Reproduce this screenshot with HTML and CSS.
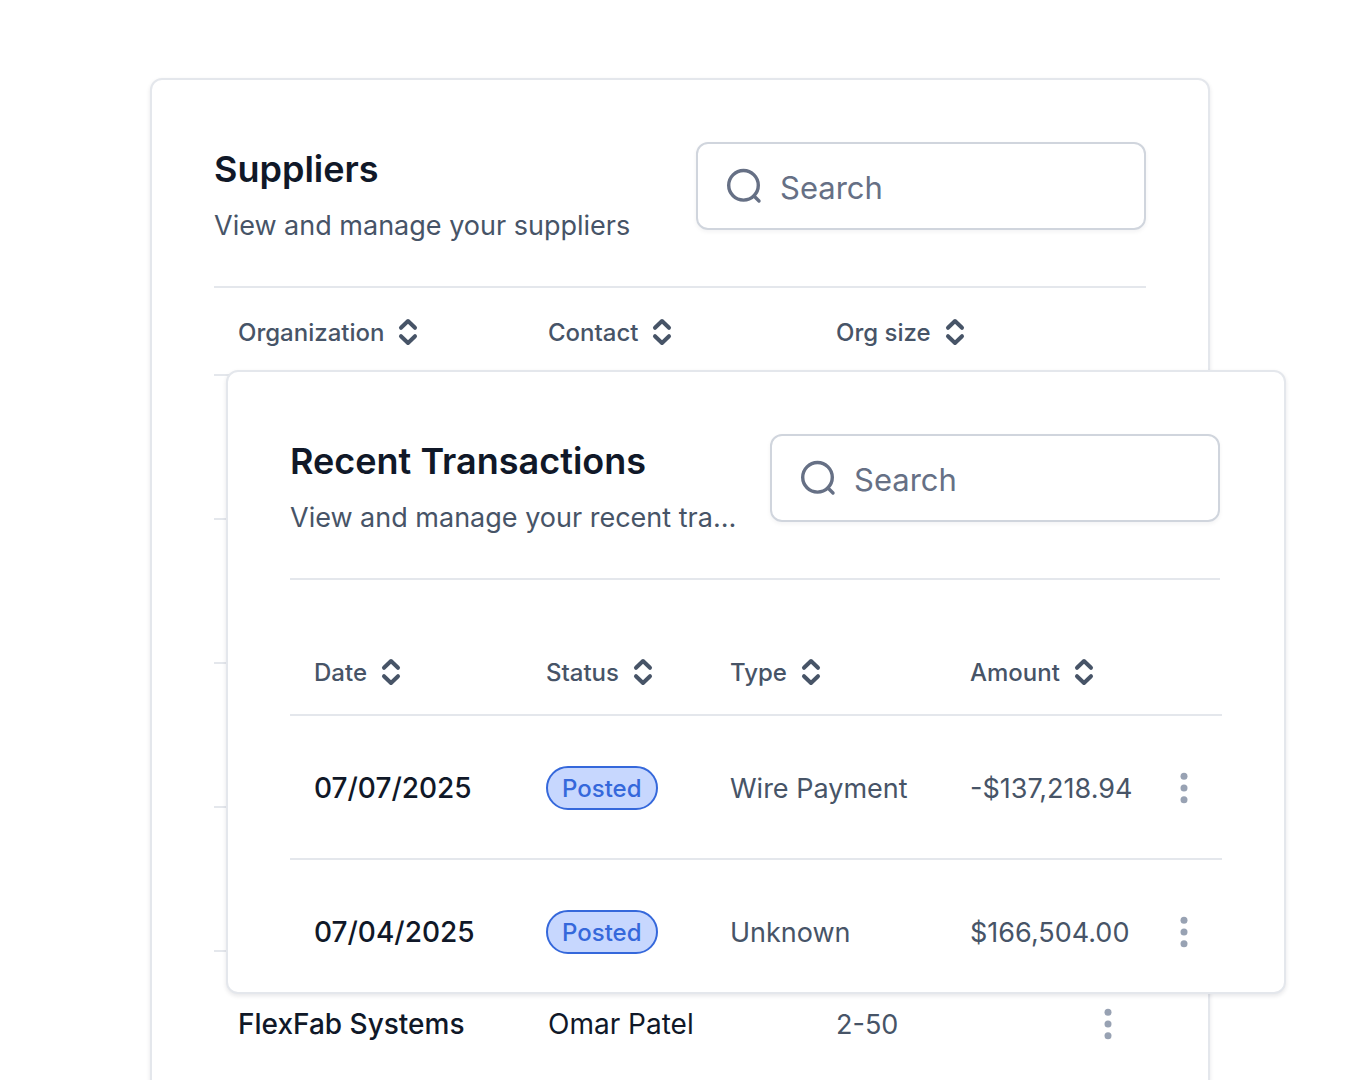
FILE: index.html
```html
<!DOCTYPE html>
<html lang="en">
<head>
    <meta charset="UTF-8">
    <meta name="viewport" content="width=device-width, initial-scale=1.0">
    <link rel="stylesheet" href="styles.css">
    <title>Suppliers</title>
</head>
<body>
    <!-- shared icons -->
    <svg class="sprite" aria-hidden="true">
        <symbol id="icon-search" viewBox="0 0 36 36">
            <circle cx="17.5" cy="17.3" r="14.8"/>
            <path d="M28 28l5 5"/>
        </symbol>
        <symbol id="icon-sort" viewBox="0 0 20 28">
            <path d="M3 9.8L10 3l7 6.8M3 18.2l7 6.8 7-6.8"/>
        </symbol>
        <symbol id="icon-dots" viewBox="0 0 28 40">
            <circle cx="14" cy="8.3" r="3.5"/>
            <circle cx="14" cy="20" r="3.5"/>
            <circle cx="14" cy="31.7" r="3.5"/>
        </symbol>
    </svg>

    <main class="stage">
        <section class="card">
            <header class="card-header">
                <div class="heading">
                    <h2>Suppliers</h2>
                    <p>View and manage your suppliers</p>
                </div>
                <label class="search">
                    <svg class="search-icon" aria-hidden="true"><use href="#icon-search"/></svg>
                    <input type="text" placeholder="Search" aria-label="Search suppliers">
                </label>
            </header>
            <table class="suppliers">
                <thead>
                    <tr>
                        <th class="col-org"><button type="button" class="sort">Organization <svg><use href="#icon-sort"/></svg></button></th>
                        <th class="col-contact"><button type="button" class="sort">Contact <svg><use href="#icon-sort"/></svg></button></th>
                        <th class="col-size"><button type="button" class="sort">Org size <svg><use href="#icon-sort"/></svg></button></th>
                        <th></th>
                    </tr>
                </thead>
                <tbody>
                    <tr><td></td><td></td><td></td><td></td></tr>
                    <tr><td></td><td></td><td></td><td></td></tr>
                    <tr><td></td><td></td><td></td><td></td></tr>
                    <tr><td></td><td></td><td></td><td></td></tr>
                    <tr>
                        <td class="strong">FlexFab Systems</td>
                        <td class="dark">Omar Patel</td>
                        <td>2-50</td>
                        <td class="actions"><button type="button" class="more" aria-label="More"><svg><use href="#icon-dots"/></svg></button></td>
                    </tr>
                </tbody>
            </table>
        </section>

        <section class="card card-front">
            <header class="card-header">
                <div class="heading">
                    <h2>Recent Transactions</h2>
                    <p>View and manage your recent transactions</p>
                </div>
                <label class="search">
                    <svg class="search-icon" aria-hidden="true"><use href="#icon-search"/></svg>
                    <input type="text" placeholder="Search" aria-label="Search transactions">
                </label>
            </header>
            <table class="transactions">
                <thead>
                    <tr>
                        <th class="col-date"><button type="button" class="sort">Date <svg><use href="#icon-sort"/></svg></button></th>
                        <th class="col-status"><button type="button" class="sort">Status <svg><use href="#icon-sort"/></svg></button></th>
                        <th class="col-type"><button type="button" class="sort">Type <svg><use href="#icon-sort"/></svg></button></th>
                        <th class="col-amount"><button type="button" class="sort">Amount <svg><use href="#icon-sort"/></svg></button></th>
                        <th></th>
                    </tr>
                </thead>
                <tbody>
                    <tr>
                        <td class="strong">07/07/2025</td>
                        <td><span class="badge">Posted</span></td>
                        <td>Wire Payment</td>
                        <td>-$137,218.94</td>
                        <td class="actions"><button type="button" class="more" aria-label="More"><svg><use href="#icon-dots"/></svg></button></td>
                    </tr>
                    <tr>
                        <td class="strong">07/04/2025</td>
                        <td><span class="badge">Posted</span></td>
                        <td>Unknown</td>
                        <td>$166,504.00</td>
                        <td class="actions"><button type="button" class="more" aria-label="More"><svg><use href="#icon-dots"/></svg></button></td>
                    </tr>
                </tbody>
            </table>
        </section>
    </main>
</body>
</html>
```
FILE: styles.css
```css
* {
    box-sizing: border-box;
}

body {
    margin: 0;
    font-family: Inter, "Liberation Sans", sans-serif;
    font-size: 27px;
    color: #475467;
    background-color: #fff;
}

button, input {
    font-family: inherit;
    color: inherit;
}

.sprite {
    display: none;
}

.stage {
    position: relative;
    height: 100vh;
    padding: 78px 150px 0;
    overflow: hidden;
}

.card {
    padding: 62px;
    border: 2px solid #e4e7ec;
    border-radius: 12px;
    background-color: #fff;
    box-shadow: 0 2px 4px rgba(16, 24, 40, 0.1);
}

/* sits on top of the suppliers card */
.card-front {
    position: absolute;
    top: 370px;
    right: 74px;
    bottom: 86px;
    left: 226px;
    overflow: hidden;
}

.card-header {
    display: flex;
    align-items: flex-start;
    justify-content: space-between;
    gap: 32px;
    padding-bottom: 30px;
    border-bottom: 2px solid #e4e7ec;
}

.card-front .card-header {
    margin-right: 2px;
}

.heading {
    flex: 1;
    min-width: 0;
}

.heading h2 {
    margin: 0;
    font-size: 36px;
    font-weight: 600;
    line-height: 54px;
    color: #101828;
}

.heading p {
    margin: 0;
    line-height: 60px;
    white-space: nowrap;
    overflow: hidden;
    text-overflow: ellipsis;
}

.search {
    display: flex;
    align-items: center;
    gap: 18px;
    width: 450px;
    height: 88px;
    padding: 0 28px;
    border: 2px solid #d0d5dd;
    border-radius: 12px;
    color: #667085;
    box-shadow: 0 2px 4px rgba(16, 24, 40, 0.05);
}

.search-icon {
    flex: none;
    width: 36px;
    height: 36px;
    fill: none;
    stroke: #667085;
    stroke-width: 3.4;
    stroke-linecap: round;
}

.search input {
    flex: 1;
    min-width: 0;
    padding: 2px 0 0;
    border: none;
    outline: none;
    background: none;
    font-size: 31px;
}

.search input::placeholder {
    color: #667085;
    opacity: 1;
}

table {
    width: 100%;
    table-layout: fixed;
    border-collapse: separate;
    border-spacing: 0;
}

.transactions {
    margin-top: 48px;
}

th, td {
    padding: 2px 24px 0;
    border-bottom: 2px solid #e4e7ec;
    text-align: left;
    white-space: nowrap;
}

th {
    height: 88px;
}

td {
    height: 144px;
}

.col-org {
    width: 310px;
}

.col-contact {
    width: 288px;
}

.col-size {
    width: 220px;
}

.col-date {
    width: 232px;
}

.col-status {
    width: 184px;
}

.col-type {
    width: 240px;
}

.col-amount {
    width: 200px;
}

.sort {
    display: flex;
    align-items: center;
    gap: 14px;
    padding: 0;
    border: none;
    background: none;
    font-size: 24px;
    font-weight: 500;
    cursor: pointer;
}

.sort svg {
    width: 20px;
    height: 28px;
    fill: none;
    stroke: #475467;
    stroke-width: 4;
    stroke-linecap: round;
    stroke-linejoin: round;
}

.strong {
    font-size: 28px;
    font-weight: 500;
    color: #101828;
}

.dark {
    font-size: 28px;
    color: #101828;
}

.badge {
    display: flex;
    align-items: center;
    width: fit-content;
    height: 44px;
    padding: 0 14px;
    border: 2px solid #3568db;
    border-radius: 22px;
    background-color: #c7d7fe;
    color: #3568db;
    font-size: 24px;
    font-weight: 500;
}

.actions {
    padding-left: 0;
}

.more {
    display: block;
    margin-left: auto;
    padding: 0;
    border: none;
    background: none;
    cursor: pointer;
}

.more svg {
    display: block;
    width: 28px;
    height: 40px;
    fill: #98a2b3;
}
```
